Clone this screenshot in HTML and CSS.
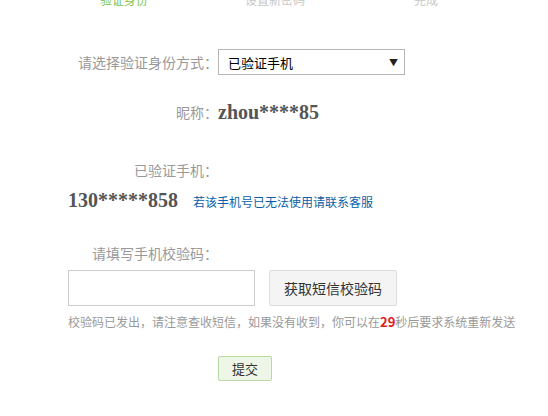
FILE: index.html
```html
<!DOCTYPE html>
<html lang="zh">
<head>
<meta charset="utf-8">
<link rel="stylesheet" href="styles.css">
</head>
<body>
<div class="steps">
  <span class="step active">验证身份</span>
  <span class="step step2">设置新密码</span>
  <span class="step step3">完成</span>
</div>
<div class="form">
  <div class="row row-select">
    <label class="label">请选择验证身份方式：</label>
    <div class="select"><span>已验证手机</span><span class="arrow">▼</span></div>
  </div>
  <div class="row row-nick">
    <label class="label">昵称：</label>
    <span class="strong">zhou****85</span>
  </div>
  <div class="row row-phone-label">
    <label class="label">已验证手机：</label>
  </div>
  <div class="phone-line">
    <span class="strong">130*****858</span>
    <a class="link" href="#">若该手机号已无法使用请联系客服</a>
  </div>
  <div class="row row-code-label">
    <label class="label">请填写手机校验码：</label>
  </div>
  <div class="code-line">
    <input class="code-input" type="text">
    <button class="sms-btn" type="button">获取短信校验码</button>
  </div>
  <p class="note">校验码已发出，请注意查收短信，如果没有收到，你可以在<b class="count">29</b>秒后要求系统重新发送</p>
  <div class="row row-submit">
    <span class="label"></span>
    <button class="submit" type="button">提交</button>
  </div>
</div>
</body>
</html>
```

FILE: styles.css
```css
html, body {
  margin: 0;
  padding: 0;
  background: #fff;
}
body {
  font-family: "Noto Sans CJK SC", "Noto Sans", sans-serif;
  font-size: 14px;
  color: #333;
  width: 548px;
  height: 416px;
  overflow: hidden;
}
.steps {
  display: flex;
  margin-top: -9px;
  height: 16px;
  line-height: 17px;
  font-size: 12px;
  color: #c8c8c8;
}
.step.active {
  color: #7cc450;
  margin-left: 100px;
}
.step2 { margin-left: 97px; }
.step3 { margin-left: 109px; }

.form {
  padding-left: 68px;
}
.row {
  display: flex;
  align-items: center;
}
.label {
  width: 150px;
  flex: none;
  text-align: right;
  color: #999;
  font-size: 14px;
}
.row-select {
  margin-top: 42px;
  height: 26px;
}
.select {
  box-sizing: border-box;
  width: 187px;
  height: 26px;
  border: 1px solid #b5b5b5;
  display: flex;
  align-items: center;
  justify-content: space-between;
  padding: 0 6px 0 9px;
  font-size: 13px;
  color: #000;
}
.arrow {
  font-size: 9px;
  color: #222;
}
.row-nick {
  margin-top: 24px;
  height: 26px;
}
.strong {
  font-family: "Liberation Serif", "Times New Roman", serif;
  font-weight: bold;
  font-size: 20px;
  color: #555;
}
.row-phone-label {
  margin-top: 35px;
  height: 20px;
}
.phone-line {
  display: flex;
  align-items: baseline;
  margin-top: 9px;
  height: 24px;
}
.link {
  margin-left: 15px;
  font-size: 12px;
  color: #0b5fa8;
  text-decoration: none;
}
.row-code-label {
  margin-top: 30px;
  height: 20px;
}
.code-line {
  display: flex;
  margin-top: 7px;
  gap: 14px;
}
.code-input {
  box-sizing: border-box;
  width: 187px;
  height: 36px;
  margin: 0;
  border: 1px solid #ccc;
  outline: none;
}
.sms-btn {
  box-sizing: border-box;
  width: 128px;
  height: 36px;
  margin: 0;
  border: 1px solid #ddd;
  border-radius: 2px;
  background: #f4f4f4;
  font-family: "Noto Sans CJK SC", sans-serif;
  font-size: 14px;
  color: #333;
}
.note {
  margin: 7px 0 0;
  font-size: 12px;
  line-height: 17px;
  color: #999;
}
.count {
  color: #e02020;
  font-size: 13px;
}
.row-submit {
  margin-top: 26px;
}
.submit {
  box-sizing: border-box;
  width: 54px;
  height: 25px;
  margin: 0;
  border: 1px solid #b8d9a4;
  border-radius: 2px;
  background: #eef7e7;
  font-family: "Noto Sans CJK SC", sans-serif;
  font-size: 13px;
  color: #333;
  padding: 0;
}
```
